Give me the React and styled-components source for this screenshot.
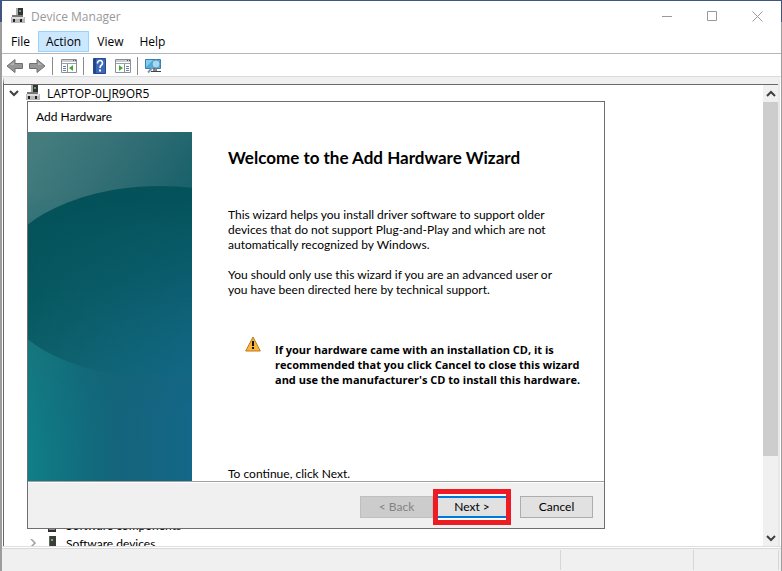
import styled, { createGlobalStyle } from "styled-components";

const menus = ["File", "Action", "View", "Help"];

const ComputerIcon = () => (
  <svg width="16" height="16" viewBox="0 0 16 16" aria-hidden="true">
    <path d="M6 0h7v8H6z" fill="#333" />
    <path d="M6 0h2v8H6z" fill="#aaa" />
    <path d="M9 2h2v2H9z" fill="#5fa35f" />
    <path d="M2 7h11v2H2z" fill="#777" />
    <path d="M1 9h14v6H1z" fill="#b9b9b9" />
    <path d="M2 9h12v2H2z" fill="#dedede" />
    <path d="M3 11h2v3H3zM10 11h2v3h-2z" fill="#222" />
  </svg>
);

const TowerIcon = () => (
  <svg width="16" height="16" viewBox="0 0 16 16" aria-hidden="true">
    <path d="M5 1h7v13H5z" fill="#3c3c3c" />
    <path d="M7 4h2v2H7z" fill="#4ecb3c" />
    <path d="M5 1h1v13H5z" fill="#666" />
  </svg>
);

const ComponentIcon = () => (
  <svg width="16" height="16" viewBox="0 0 16 16" aria-hidden="true">
    <path d="M5 1h6v11H5z" fill="#555" />
    <path d="M4 11h8v4H4z" fill="#2e2e2e" />
    <path d="M5 12h6v1H5z" fill="#888" />
  </svg>
);

const ArrowIcon = ({ forward }) => (
  <svg width="17" height="16" viewBox="0 0 17 16" aria-hidden="true">
    <path
      d={
        forward
          ? "M.5 5.500H8V1.500L16 8l-8 6.500V10.500H.5z"
          : "M16.500 5.500H9V1.500L1 8l8 6.500V10.500h7.500z"
      }
      fill="#979797"
      stroke="#707070"
    />
    <path d={forward ? "M2 7h7V4l4 3" : "M15 7H8V4L4 7"} fill="#b5b5b5" />
  </svg>
);

const PanelIcon = ({ right }) => (
  <svg width="16" height="16" viewBox="0 0 16 16" aria-hidden="true">
    <path d="M.5 1.500h15v13H.5z" fill="#fff" stroke="#8a8f96" />
    <path d="M1 2h14v2H1z" fill="#c9ced6" />
    <path d="M12 2h1v1h-1zM14 2h1v1h-1z" fill="#555" />
    <path d="M1 5h14v1H1z" fill="#9aa0a8" />
    {right ? (
      <>
        <path d="M9 6h1v8H9z" fill="#8a8f96" />
        <path d="M11 8h3v1h-3zM11 10h3v1h-3zM11 12h3v1h-3z" fill="#6680ad" />
        <path d="M4 7v6l4-3z" fill="#3fae35" />
      </>
    ) : (
      <>
        <path d="M6 6h1v8H6z" fill="#8a8f96" />
        <path d="M2 8h3v1H2zM2 10h3v1H2zM2 12h3v1H2z" fill="#6680ad" />
        <path d="M12 7v6l-4-3z" fill="#3fae35" />
      </>
    )}
  </svg>
);

const HelpIcon = () => (
  <svg width="13" height="16" viewBox="0 0 13 16" aria-hidden="true">
    <path d="M.5.5h12v15H.5z" fill="#3c68b8" stroke="#27488c" />
    <path d="M1 1h2v14H1z" fill="#24468f" />
    <path
      d="M4.500 5.500V5a2.500 2.500 0 1 1 4 2C7.300 7.800 7 8.300 7 10"
      fill="none"
      stroke="#fff"
      strokeWidth="1.600"
    />
    <path d="M6 11.500h2v2H6z" fill="#fff" />
  </svg>
);

const ScanIcon = () => (
  <svg width="17" height="16" viewBox="0 0 17 16" aria-hidden="true">
    <path d="M.5 1.500h15v9H.5z" fill="#49aee0" stroke="#3b7ea8" />
    <path d="M1 2h7L1 9z" fill="#83cdef" />
    <path d="M6 13.500h10" stroke="#444" />
    <path d="M8 11h4v2H8z" fill="#888" />
    <circle cx="11" cy="6" r="4" fill="#a5d8f3" stroke="#6597bb" />
    <path d="M8 9l-5 5.500" stroke="#8498a8" strokeWidth="2" />
  </svg>
);

const Chevron = ({ direction, light }) => {
  const paths = {
    up: "M1 6l4-4 4 4",
    down: "M1 2l4 4 4-4",
    right: "M3 0l4 4-4 4",
  };
  return (
    <svg width="10" height="8" viewBox="0 0 10 8" aria-hidden="true">
      <path
        d={paths[direction]}
        fill="none"
        stroke={light ? "#a0a0a0" : "#404040"}
        strokeWidth={light ? 1.5 : 2}
      />
    </svg>
  );
};

const WarningIcon = () => (
  <svg width="16" height="16" viewBox="0 0 16 16" aria-hidden="true">
    <path
      d="M8 1l7.300 14H.7z"
      fill="#fcb53b"
      stroke="#b87a1c"
      strokeLinejoin="round"
    />
    <path d="M7 5h2v5H7zM7 11h2v2H7z" fill="#111" />
  </svg>
);

const WizardArt = () => (
  <svg viewBox="0 0 164 349" preserveAspectRatio="none" aria-hidden="true">
    <defs>
      <linearGradient id="haze" x1="0.100" y1="0" x2="0.500" y2="0.550">
        <stop offset="0" stopColor="#457d7f" />
        <stop offset="0.600" stopColor="#2d6b72" />
        <stop offset="1" stopColor="#16606a" />
      </linearGradient>
      <radialGradient id="sea" cx="-0.100" cy="0.950" r="0.800">
        <stop offset="0" stopColor="#10868e" />
        <stop offset="0.500" stopColor="#0f7a82" stopOpacity="0.700" />
        <stop offset="1" stopColor="#0b6670" stopOpacity="0" />
      </radialGradient>
      <linearGradient id="orb" x1="0.300" y1="0" x2="0.500" y2="1">
        <stop offset="0" stopColor="#045159" />
        <stop offset="0.500" stopColor="#07585f" />
        <stop offset="1" stopColor="#0f646d" />
      </linearGradient>
      <linearGradient id="blue" x1="0" y1="0" x2="1" y2="0">
        <stop offset="0" stopColor="#14688c" stopOpacity="0" />
        <stop offset="1" stopColor="#14688c" stopOpacity="0.900" />
      </linearGradient>
      <linearGradient id="fade" x1="0" y1="0" x2="0" y2="1">
        <stop offset="0.180" stopColor="#fff" stopOpacity="0" />
        <stop offset="0.800" stopColor="#fff" />
      </linearGradient>
      <mask id="lower">
        <path d="M0 0h164v349H0z" fill="url(#fade)" />
      </mask>
    </defs>
    <path d="M0 0h164v349H0z" fill="url(#haze)" />
    <path d="M0 0h164v349H0z" fill="url(#sea)" />
    <ellipse cx="132" cy="150" rx="165" ry="96" fill="url(#orb)" />
    <path d="M0 0h164v349H0z" fill="url(#blue)" mask="url(#lower)" />
  </svg>
);

const App = () => {
  return (
    <Desktop>
      <GlobalStyle />
      <Window>
        <TitleBar>
          <ComputerIcon />
          <h1>Device Manager</h1>
          <Caption aria-label="Minimize">
            <svg width="11" height="11" viewBox="0 0 11 11">
              <path d="M0 5.500h10" stroke="#999" />
            </svg>
          </Caption>
          <Caption aria-label="Maximize">
            <svg width="11" height="11" viewBox="0 0 11 11">
              <path d="M.5.5h9v9h-9z" fill="none" stroke="#999" />
            </svg>
          </Caption>
          <Caption aria-label="Close">
            <svg width="11" height="11" viewBox="0 0 11 11">
              <path d="M.5.5l10 10M10.500.5l-10 10" stroke="#999" />
            </svg>
          </Caption>
        </TitleBar>
        <MenuBar>
          {menus.map((menu) => (
            <MenuButton key={menu} $open={menu === "Action"}>
              {menu}
            </MenuButton>
          ))}
        </MenuBar>
        <Toolbar>
          <ToolButton aria-label="Back">
            <ArrowIcon />
          </ToolButton>
          <ToolButton aria-label="Forward">
            <ArrowIcon forward />
          </ToolButton>
          <Separator />
          <ToolButton aria-label="Show console tree">
            <PanelIcon />
          </ToolButton>
          <Separator />
          <ToolButton aria-label="Help">
            <HelpIcon />
          </ToolButton>
          <ToolButton aria-label="Show action pane">
            <PanelIcon right />
          </ToolButton>
          <Separator />
          <ToolButton aria-label="Scan for hardware changes">
            <ScanIcon />
          </ToolButton>
        </Toolbar>
        <Workspace>
          <Tree>
            <TreeRow>
              <Chevron direction="down" />
              <ComputerIcon />
              LAPTOP-0LJR9OR5
            </TreeRow>
            <TreeEnd>
              <TreeRow $child>
                <Chevron direction="right" light />
                <ComponentIcon />
                Software components
              </TreeRow>
              <TreeRow $child>
                <Chevron direction="right" light />
                <TowerIcon />
                Software devices
              </TreeRow>
            </TreeEnd>
          </Tree>
          <Scrollbar>
            <ScrollButton aria-label="Scroll up">
              <Chevron direction="up" />
            </ScrollButton>
            <Track>
              <Thumb />
            </Track>
            <ScrollButton aria-label="Scroll down">
              <Chevron direction="down" />
            </ScrollButton>
          </Scrollbar>
          <Dialog role="dialog" aria-labelledby="wizard-title">
            <DialogTitle id="wizard-title">Add Hardware</DialogTitle>
            <DialogBody>
              <WizardArt />
              <Content>
                <h2>Welcome to the Add Hardware Wizard</h2>
                <p>
                  This wizard helps you install driver software to support older
                  <br />
                  devices that do not support Plug-and-Play and which are not
                  <br />
                  automatically recognized by Windows.
                </p>
                <p>
                  You should only use this wizard if you are an advanced user or
                  <br />
                  you have been directed here by technical support.
                </p>
                <Warning>
                  <WarningIcon />
                  <strong>
                    If your hardware came with an installation CD, it is
                    <br />
                    recommended that you click Cancel to close this wizard
                    <br />
                    and use the manufacturer's CD to install this hardware.
                  </strong>
                </Warning>
                <Continue>To continue, click Next.</Continue>
              </Content>
            </DialogBody>
            <DialogFooter>
              <Button disabled>&lt; Back</Button>
              <Highlight>
                <NextButton>Next &gt;</NextButton>
              </Highlight>
              <Button>Cancel</Button>
            </DialogFooter>
          </Dialog>
        </Workspace>
        <StatusBar>
          <StatusCell $grow />
          <StatusCell $width="133px" />
          <StatusCell $width="85px" />
        </StatusBar>
      </Window>
    </Desktop>
  );
};

export default App;

const GlobalStyle = createGlobalStyle`
  * {
    box-sizing: border-box;
  }
  body {
    margin: 0;
    font: 12px/15px "Open Sans", "Noto Sans", sans-serif;
    color: #000;
  }
  h1, h2, p {
    margin: 0;
  }
  button {
    font: inherit;
    color: inherit;
    padding: 0;
    border: none;
    background: none;
  }
  svg {
    display: block;
    flex: none;
  }
`;

const Desktop = styled.div`
  height: 100vh;
  padding: 1px 1px 0 2px;
  background: linear-gradient(#3f5680 22px, #9d9d9d 22px);
`;

const Window = styled.main`
  height: 100%;
  display: flex;
  flex-direction: column;
  background: #fff;
`;

const TitleBar = styled.header`
  height: 30px;
  display: flex;
  align-items: center;
  padding: 0 1px 0 8px;

  h1 {
    flex: 1;
    margin-left: 5px;
    font-size: 12px;
    font-weight: 400;
    color: #999;
  }
`;

const Caption = styled.button`
  width: 45px;
  height: 30px;
  display: flex;
  align-items: center;
  justify-content: center;
`;

const MenuBar = styled.nav`
  height: 23px;
  display: flex;
  padding-left: 1px;
  border-bottom: 1px solid #b4b6bd;
`;

const MenuButton = styled.button`
  height: 21px;
  padding: 0 7px;
  border: 1px solid ${(props) => (props.$open ? "#99d1ff" : "transparent")};
  background: ${(props) => (props.$open ? "#cce8ff" : "transparent")};
`;

const Toolbar = styled.div`
  height: 23px;
  display: flex;
  align-items: center;
  gap: 6px;
  padding: 1px 4px 0;
  border-bottom: 1px solid #dcdcdc;
`;

const ToolButton = styled.button`
  display: flex;
  justify-content: center;
  min-width: 17px;
`;

const Separator = styled.span`
  width: 1px;
  height: 18px;
  margin-right: 1px;
  background: #8a8a8a;
`;

const Workspace = styled.section`
  flex: 1;
  min-height: 0;
  position: relative;
  display: flex;
  margin: 0 1px;
  border: solid #696969;
  border-width: 7px 0 0 1px;
  border-top-color: #f0f0f0;
  border-right: 2px solid #e8e8e8;
  box-shadow: inset 0 1px 0 #696969;
`;

const Tree = styled.div`
  flex: 1;
  display: flex;
  flex-direction: column;
  justify-content: space-between;
  overflow: hidden;
`;

const TreeEnd = styled.div`
  margin-bottom: -6px;
`;

const TreeRow = styled.div`
  height: 18px;
  display: flex;
  align-items: center;
  gap: 6px;
  padding-left: ${(props) => (props.$child ? "24px" : "5px")};
  font-family: ${(props) => (props.$child ? "Lato" : '"Open Sans"')}, sans-serif;
`;

const Scrollbar = styled.div`
  width: 15px;
  display: flex;
  flex-direction: column;
  margin-top: 1px;
  background: #f0f0f0;
`;

const ScrollButton = styled.button`
  height: 17px;
  display: flex;
  align-items: center;
  justify-content: center;
`;

const Track = styled.div`
  flex: 1;
`;

const Thumb = styled.div`
  height: 83%;
  background: #cdcdcd;
`;

/* The wizard floats over the device tree. */
const Dialog = styled.div`
  position: absolute;
  top: 17px;
  left: 23px;
  width: min(578px, 100%);
  border: 1px solid #6e6e6e;
  background: #fff;
  font-family: Lato, "Open Sans", sans-serif;
`;

const DialogTitle = styled.div`
  padding: 7px 8px 8px;
`;

const DialogBody = styled.div`
  display: flex;

  > svg {
    width: 164px;
    height: auto;
  }
`;

const Content = styled.div`
  flex: 1;
  display: flex;
  flex-direction: column;
  gap: 15px;
  padding: 16px 16px 0 36px;

  h2 {
    margin-bottom: 24px;
    font-size: 17px;
    line-height: 20px;
    font-weight: 700;
  }
`;

const Warning = styled.div`
  display: flex;
  gap: 14px;
  margin-top: 24px;
  padding-left: 17px;

  strong {
    padding-top: 6px;
    font-family: "Open Sans", sans-serif;
    font-size: 11px;
    font-weight: 700;
  }
`;

const Continue = styled.p`
  margin-top: auto;
`;

const DialogFooter = styled.footer`
  height: 47px;
  display: flex;
  align-items: center;
  justify-content: flex-end;
  padding: 3px 11px 0 0;
  border-top: 1px solid #a0a0a0;
  background: #f0f0f0;
  box-shadow: inset 0 1px 0 #fff;
`;

const Button = styled.button`
  width: 73px;
  height: 22px;
  border: 1px solid ${(props) => (props.disabled ? "#bfbfbf" : "#adadad")};
  background: ${(props) => (props.disabled ? "#cccccc" : "#e1e1e1")};
  color: ${(props) => (props.disabled ? "#838383" : "#000")};
`;

/* Red marker drawn round the button to press. */
const Highlight = styled.span`
  display: flex;
  padding: 2px 0;
  margin-right: 9px;
  border: 5px solid #ed1c24;
  background: #fff;
`;

const NextButton = styled(Button)`
  width: 68px;
  border: solid #0078d7;
  border-width: 2px 0;
`;

const StatusBar = styled.footer`
  height: 25px;
  display: flex;
  padding: 3px 2px 1px 0;
  border-top: 1px solid #dfdfdf;
  background: #f0f0f0;
  box-shadow: inset 0 1px 0 #fff, inset 0 2px 0 #d9d9d9;
`;

const StatusCell = styled.div`
  flex: ${(props) => (props.$grow ? 1 : "none")};
  width: ${(props) => props.$width};
  border-right: 1px solid #d7d7d7;
`;
